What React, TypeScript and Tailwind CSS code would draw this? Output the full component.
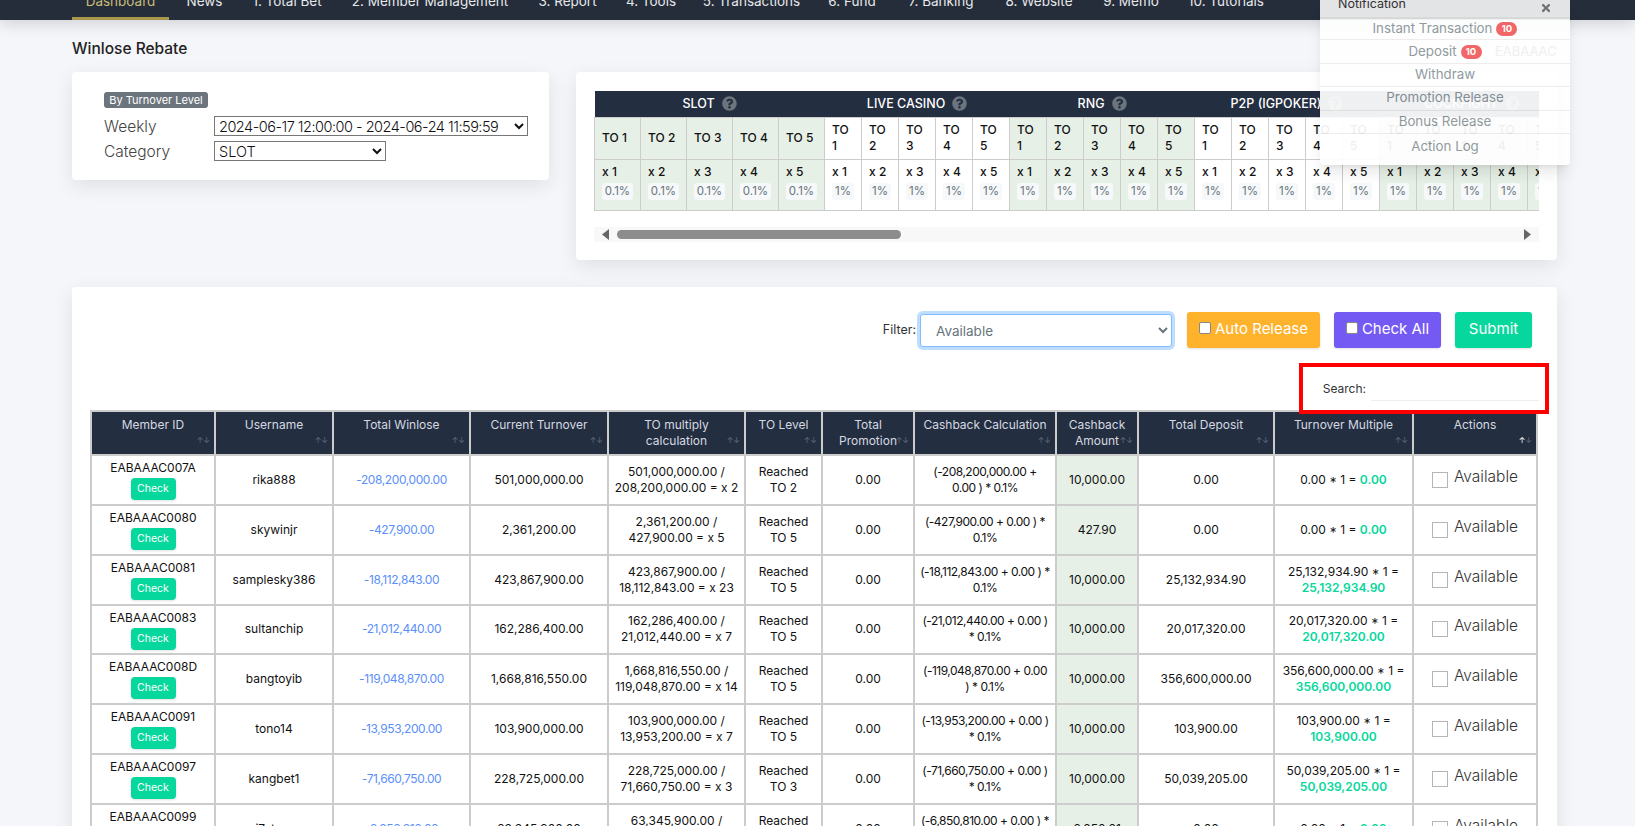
import { FaQuestionCircle, FaTimes } from "react-icons/fa"

const navItems = [
  { label: "Dashboard", width: "w-[97px]", active: true },
  { label: "News", width: "w-[71px]" },
  { label: "1. Total Bet", width: "w-[94px]" },
  { label: "2. Member Management", width: "w-[192px]" },
  { label: "3. Report", width: "w-[83px]" },
  { label: "4. Tools", width: "w-[84px]" },
  { label: "5. Transactions", width: "w-[117px]" },
  { label: "6. Fund", width: "w-[84px]" },
  { label: "7. Banking", width: "w-[94px]" },
  { label: "8. Website", width: "w-[102px]" },
  { label: "9. Memo", width: "w-[82px]" },
  { label: "10. Tutorials", width: "w-[108px]" },
]

const games = [
  { name: "SLOT", rate: "0.1%", green: true, wide: true },
  { name: "LIVE CASINO", rate: "1%", green: false, wide: false },
  { name: "RNG", rate: "1%", green: true, wide: false },
  { name: "P2P (IGPOKER)", rate: "1%", green: false, wide: false },
  { name: "COCKFIGHT", rate: "1%", green: true, wide: false },
]

const levels = [1, 2, 3, 4, 5]

const columns = [
  { title: "Member ID", width: "w-[124px]" },
  { title: "Username", width: "w-[118px]" },
  { title: "Total Winlose", width: "w-[137px]" },
  { title: "Current Turnover", width: "w-[138px]" },
  { title: "TO multiply calculation", width: "w-[137px]" },
  { title: "TO Level", width: "w-[77px]" },
  { title: "Total Promotion", width: "w-[92px]" },
  { title: "Cashback Calculation", width: "w-[142px]" },
  { title: "Cashback Amount", width: "w-[82px]" },
  { title: "Total Deposit", width: "w-[136px]" },
  { title: "Turnover Multiple", width: "w-[139px]" },
  { title: "Actions", width: "w-[124px]" },
]

const rows = [
  { id: "EABAAAC007A", user: "rika888", winlose: "-208,200,000.00", turnover: "501,000,000.00", calc: "501,000,000.00 /\n208,200,000.00 = x 2", level: "Reached TO 2", cashbackCalc: "(-208,200,000.00 +\n0.00 ) * 0.1%", cashback: "10,000.00", deposit: "0.00" },
  { id: "EABAAAC0080", user: "skywinjr", winlose: "-427,900.00", turnover: "2,361,200.00", calc: "2,361,200.00 /\n427,900.00 = x 5", level: "Reached TO 5", cashbackCalc: "(-427,900.00 + 0.00 ) *\n0.1%", cashback: "427.90", deposit: "0.00" },
  { id: "EABAAAC0081", user: "samplesky386", winlose: "-18,112,843.00", turnover: "423,867,900.00", calc: "423,867,900.00 /\n18,112,843.00 = x 23", level: "Reached TO 5", cashbackCalc: "(-18,112,843.00 + 0.00 ) *\n0.1%", cashback: "10,000.00", deposit: "25,132,934.90" },
  { id: "EABAAAC0083", user: "sultanchip", winlose: "-21,012,440.00", turnover: "162,286,400.00", calc: "162,286,400.00 /\n21,012,440.00 = x 7", level: "Reached TO 5", cashbackCalc: "(-21,012,440.00 + 0.00 )\n* 0.1%", cashback: "10,000.00", deposit: "20,017,320.00" },
  { id: "EABAAAC008D", user: "bangtoyib", winlose: "-119,048,870.00", turnover: "1,668,816,550.00", calc: "1,668,816,550.00 /\n119,048,870.00 = x 14", level: "Reached TO 5", cashbackCalc: "(-119,048,870.00 + 0.00\n) * 0.1%", cashback: "10,000.00", deposit: "356,600,000.00" },
  { id: "EABAAAC0091", user: "tono14", winlose: "-13,953,200.00", turnover: "103,900,000.00", calc: "103,900,000.00 /\n13,953,200.00 = x 7", level: "Reached TO 5", cashbackCalc: "(-13,953,200.00 + 0.00 )\n* 0.1%", cashback: "10,000.00", deposit: "103,900.00" },
  { id: "EABAAAC0097", user: "kangbet1", winlose: "-71,660,750.00", turnover: "228,725,000.00", calc: "228,725,000.00 /\n71,660,750.00 = x 3", level: "Reached TO 3", cashbackCalc: "(-71,660,750.00 + 0.00 )\n* 0.1%", cashback: "10,000.00", deposit: "50,039,205.00" },
  { id: "EABAAAC0099", user: "i7stars", winlose: "-6,850,810.00", turnover: "63,345,900.00", calc: "63,345,900.00 /\n6,850,810.00 = x 9", level: "Reached TO 4", cashbackCalc: "(-6,850,810.00 + 0.00 ) *\n0.1%", cashback: "6,850.81", deposit: "0.00" },
]

const notifications = [
  { label: "Instant Transaction", badge: "10" },
  { label: "Deposit", badge: "10" },
  { label: "Withdraw" },
  { label: "Promotion Release" },
  { label: "Bonus Release" },
  { label: "Action Log" },
]

function RateTable() {
  return (
    <table className="table-fixed border-collapse w-[970px] text-[12px] leading-[16px] text-[#111] font-medium">
      <colgroup>
        {games.map((game) =>
          levels.map((level) => (
            <col key={game.name + level} className={game.wide ? "w-[46px]" : "w-[37px]"} />
          )),
        )}
      </colgroup>
      <thead>
        <tr className="h-[26px] bg-[#242e41] text-white">
          {games.map((game) => (
            <th key={game.name} colSpan={5} className="font-medium text-[12.5px] text-center whitespace-nowrap">
              <span className="inline-flex items-center gap-[7px]">
                {game.name}
                <FaQuestionCircle className="text-[#6c757d] text-[15px]" />
              </span>
            </th>
          ))}
        </tr>
      </thead>
      <tbody>
        <tr className="h-[42px]">
          {games.map((game) =>
            levels.map((level) => (
              <td
                key={game.name + level}
                className={`border border-[#ccc] pl-[7px] ${game.wide ? "pr-[4px]" : "pr-[9px]"} ${game.green ? "bg-[#e6f0e6]" : "bg-white"}`}
              >
                TO {level}
              </td>
            )),
          )}
        </tr>
        <tr className="h-[51px]">
          {games.map((game) =>
            levels.map((level) => (
              <td
                key={game.name + level}
                className={`border border-[#ccc] pl-[7px] align-top pt-[4px] ${game.green ? "bg-[#e6f0e6]" : "bg-white"}`}
              >
                <div className="whitespace-nowrap">x {level}</div>
                <div className={`mt-[3px] h-[17px] rounded-[3px] bg-[#f6f8fa] text-[#67757c] font-normal text-[11.5px] leading-[17px] text-center ${game.wide ? "w-[31px]" : "w-[22px]"}`}>
                  {game.rate}
                </div>
              </td>
            )),
          )}
        </tr>
      </tbody>
    </table>
  )
}

function ScrollBar() {
  return (
    <div className="mt-[16px] h-[15px] bg-[#f8f8f8] flex items-center justify-between px-[8px]">
      <svg width="7" height="11" viewBox="0 0 7 11">
        <path d="M7 0 L0 5.5 L7 11 Z" fill="#666" />
      </svg>
      <div className="ml-[8px] mr-auto w-[284px] h-[9px] rounded-full bg-[#8c8c8c]" />
      <svg width="7" height="11" viewBox="0 0 7 11">
        <path d="M0 0 L7 5.5 L0 11 Z" fill="#666" />
      </svg>
    </div>
  )
}

function MemberTable() {
  return (
    <table className="table-fixed border-collapse w-[1446px] text-[12px] leading-[16px] text-[#111] text-center">
      <colgroup>
        {columns.map((col) => (
          <col key={col.title} className={col.width} />
        ))}
      </colgroup>
      <thead>
        <tr className="h-[44px] bg-[#242e41] text-[#d5d9e0]">
          {columns.map((col) => (
            <th key={col.title} className="relative border-2 border-[#ccc] font-normal align-top pt-[5px] px-[4px]">
              {col.title}
              <span className="absolute right-[4px] top-[20px] text-[8px] text-[#5f6b7c]">
                <span className={col.title === "Actions" ? "text-white" : ""}>↑</span>↓
              </span>
            </th>
          ))}
        </tr>
      </thead>
      <tbody>
        {rows.map((row) => (
          <tr key={row.id} className="h-[49.85px] bg-white">
            <td className="border-2 border-[#ccc] align-top pt-[4px]">
              <div>{row.id}</div>
              <button className="mt-[2px] w-[45px] h-[22px] rounded-[4px] bg-[#06d79c] text-white text-[10.5px] shadow-sm">
                Check
              </button>
            </td>
            <td className="border-2 border-[#ccc]">{row.user}</td>
            <td className="border-2 border-[#ccc] text-[#5b8ff9] tracking-[-0.4px]">{row.winlose}</td>
            <td className="border-2 border-[#ccc]">{row.turnover}</td>
            <td className="border-2 border-[#ccc] whitespace-pre">{row.calc}</td>
            <td className="border-2 border-[#ccc] px-[12px]">{row.level}</td>
            <td className="border-2 border-[#ccc]">0.00</td>
            <td className="border-2 border-[#ccc] whitespace-pre tracking-[-0.5px]">{row.cashbackCalc}</td>
            <td className="border-2 border-[#ccc] bg-[#e6f0e6]">{row.cashback}</td>
            <td className="border-2 border-[#ccc]">{row.deposit}</td>
            <td className="border-2 border-[#ccc]">
              {row.deposit} * 1 = {row.deposit !== "0.00" && <br />}
              <span className="text-[#06d79c] font-semibold">{row.deposit}</span>
            </td>
            <td className="border-2 border-[#ccc]">
              <label className="flex items-start justify-center gap-[6px] text-[15.5px] leading-[20px] font-light text-[#333] -mt-[5px]">
                <span className="mt-[5px] w-[16px] h-[16px] border border-[#b5b5b5] bg-white" />
                Available
              </label>
            </td>
          </tr>
        ))}
      </tbody>
    </table>
  )
}

function NotificationPanel() {
  return (
    <div className="absolute left-[1320px] top-0 w-[250px] h-[165px] rounded-b-[4px] bg-white opacity-[.93] shadow-lg overflow-hidden">
      <div className="h-[17px] bg-[#f2f2f2] flex items-center justify-between px-[18px]">
        <span className="text-[12.5px] text-[#333] -mt-[9px]">Notification</span>
        <FaTimes className="text-[#777] text-[12px] -mt-[1px]" />
      </div>
      {notifications.map((item, index) => (
        <div
          key={item.label}
          className={`relative h-[23.4px] flex items-center justify-center gap-[4px] text-[13.3px] text-[#8a9499] ${
            index === 0 ? "border-t-2 border-t-[#e5e5e5]" : ""
          } ${index === 5 ? "pt-[3px]" : "border-b border-[#ececec]"}`}
        >
          {item.label}
          {item.badge && (
            <span className="w-[21px] h-[14px] rounded-full bg-[#f25c5c] text-white text-[9.5px] font-bold leading-[14px] text-center">
              {item.badge}
            </span>
          )}
          {item.label === "Deposit" && (
            <span className="absolute left-[175px] top-[2px] text-[13px] text-[#f0f0f0]">EABAAAC</span>
          )}
        </div>
      ))}
    </div>
  )
}

export default function App() {
  return (
    <div className="relative h-[826px] overflow-hidden bg-[#f4f6f9] font-['Inter',sans-serif] text-[#111]">
      <nav className="h-[20px] bg-[#252d3a] pl-[72px] flex overflow-hidden shadow-[0_4px_16px_rgba(0,0,0,0.15)] relative">
        {navItems.map((item) => (
          <div
            key={item.label}
            className={`${item.width} h-[20px] flex-none text-center text-[13.5px] leading-[20px] whitespace-nowrap ${
              item.active ? "border-b-[3px] border-[#a8974a] text-[#c9bb78]" : "text-[#e5e7eb]"
            }`}
          >
            <div className="-mt-[9px]">{item.label}</div>
          </div>
        ))}
      </nav>

      <div className="pl-[72px] pr-[78px]">
        <h1 className="mt-[19px] h-[20px] text-[15.5px] leading-[20px] font-medium text-[#222]">Winlose Rebate</h1>

        <div className="mt-[13px] flex items-start gap-[27px]">
          <div className="w-[477px] h-[108px] rounded-[4px] bg-white shadow-[0_6px_20px_rgba(0,0,0,0.09)] pt-[20px] pl-[32px]">
            <span className="block w-[104px] h-[16px] rounded-[3px] bg-[#6c757d] text-white text-[11px] leading-[16px] text-center">
              By Turnover Level
            </span>
            <div className="mt-[8px] flex items-center h-[20px]">
              <span className="w-[110px] text-[15.5px] font-light text-[#444] pt-[2px]">Weekly</span>
              <select className="w-[314px] h-[20px] border border-[#767676] bg-white text-[14.5px] tracking-[-0.5px] font-light text-[#111]">
                <option>2024-06-17 12:00:00 - 2024-06-24 11:59:59</option>
              </select>
            </div>
            <div className="mt-[5px] flex items-center h-[20px]">
              <span className="w-[110px] text-[15.5px] font-light text-[#444] pt-[2px]">Category</span>
              <select className="w-[172px] h-[20px] border border-[#767676] bg-white text-[14.5px] font-light text-[#111]">
                <option>SLOT</option>
              </select>
            </div>
          </div>

          <div className="w-[981px] h-[188px] rounded-[4px] bg-white shadow-[0_6px_20px_rgba(0,0,0,0.09)] pt-[19px] pl-[18px]">
            <div className="w-[945px]">
              <div className="overflow-hidden">
                <RateTable />
              </div>
              <ScrollBar />
            </div>
          </div>
        </div>

        <div className="relative mt-[27px] w-[1485px] h-[600px] rounded-[4px] bg-white shadow-[0_6px_20px_rgba(0,0,0,0.09)] pt-[25px] pl-[18px]">
          <div className="flex items-center justify-end pr-[25px] h-[36px]">
            <span className="text-[12.5px] mr-[4px] text-[#333]">Filter:</span>
            <select className="w-[252px] h-[33px] rounded-[3px] border border-[#80bdff] ring-[3px] ring-[#007bff]/25 bg-white pl-[11px] pt-[2px] text-[13.5px] text-[#67757c]">
              <option>Available</option>
            </select>
            <button className="ml-[15px] w-[133px] h-[36px] rounded-[3px] bg-[#ffb22b] text-white text-[15px] pb-[2px] flex items-center justify-center gap-[4px] shadow-sm">
              <span className="w-[12px] h-[12px] rounded-[2px] border border-[#888] bg-white -mt-[2px]" />
              Auto Release
            </button>
            <button className="ml-[14px] w-[107px] h-[36px] rounded-[3px] bg-[#745af2] text-white text-[15px] pb-[2px] flex items-center justify-center gap-[4px] shadow-sm">
              <span className="w-[12px] h-[12px] rounded-[2px] border border-[#888] bg-white -mt-[2px]" />
              Check All
            </button>
            <button className="ml-[14px] w-[77px] h-[36px] rounded-[3px] bg-[#06d79c] text-white text-[15px] pb-[2px] shadow-sm">
              Submit
            </button>
          </div>

          <div className="h-[62px] flex items-start justify-end pr-[18px] pt-[33px]">
            <span className="text-[12px] leading-[16px] text-[#333] mr-[5px]">Search:</span>
            <span className="w-[168px] h-[20px] border-b border-[#eee]" />
          </div>

          {/* red box drawn over the page, an annotation in the shot */}
          <div className="absolute left-[1227px] top-[76px] w-[250px] h-[51px] border-[4px] border-[#f00]" />

          <MemberTable />
        </div>
      </div>

      <NotificationPanel />
    </div>
  )
}
